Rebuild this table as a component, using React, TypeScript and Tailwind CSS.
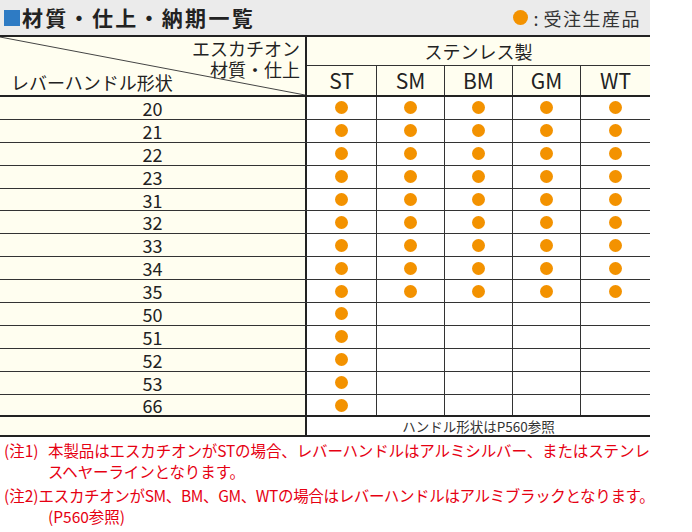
import React from "react";

const rows: [string, number][] = [
  ["20", 5],
  ["21", 5],
  ["22", 5],
  ["23", 5],
  ["31", 5],
  ["32", 5],
  ["33", 5],
  ["34", 5],
  ["35", 5],
  ["50", 1],
  ["51", 1],
  ["52", 1],
  ["53", 1],
  ["66", 1],
];

const cols = ["ST", "SM", "BM", "GM", "WT"];
const colCls = [
  "w-[70px] border-r border-[#333]",
  "w-[68px] border-r border-[#333]",
  "w-[68px] border-r border-[#333]",
  "w-[68px] border-r border-[#333]",
  "w-[69px]",
];

function Dot({ size = "w-[13px] h-[13px]" }: { size?: string }) {
  return <span className={`block rounded-full bg-[#f39200] ${size}`} />;
}

export default function App() {
  return (
    <div className="w-[692px] h-[532px] bg-white font-['Noto_Sans_CJK_JP',sans-serif] text-[#222]">
      {/* title bar */}
      <div className="w-[650px] h-[35px] bg-[#ebebeb] flex items-center justify-between">
        <div className="flex items-center">
          <span className="block w-[16px] h-[16px] bg-[#2e7bc4] ml-[4px] mr-[2px]" />
          <span className="text-[21px] leading-none font-semibold tracking-[2.3px] text-[#222]">
            材質・仕上・納期一覧
          </span>
        </div>
        <div className="flex items-center pr-[9px]">
          <Dot size="w-[15px] h-[15px]" />
          <span className="text-[18px] leading-none text-[#333] ml-[5px]">:</span>
          <span className="text-[18px] leading-none text-[#333] ml-[5px] tracking-[1.5px]">
            受注生産品
          </span>
        </div>
      </div>

      {/* table */}
      <div className="w-[650px] border-t-2 border-[#222]">
        {/* header */}
        <div className="flex h-[60px] border-b-2 border-[#222]">
          <div className="relative w-[307px] border-r-2 border-[#222] bg-[#fffef0] flex flex-col">
            <svg
              className="absolute inset-0"
              width="305"
              height="58"
              viewBox="0 0 305 58"
            >
              <line x1="0" y1="0" x2="305" y2="58" stroke="#444" strokeWidth="1" />
            </svg>
            <div className="relative text-right pr-[5px] pt-[1px] text-[18px] leading-[21px]">
              <div>エスカチオン</div>
              <div>材質・仕上</div>
            </div>
            <div className="relative pl-[11px] mt-[-8px] text-[18px] leading-[21px]">
              レバーハンドル形状
            </div>
          </div>
          <div className="w-[343px] flex flex-col bg-[#fffef0]">
            <div className="h-[29px] border-b border-[#333] flex items-center justify-center text-[18px] leading-none">
              ステンレス製
            </div>
            <div className="flex flex-1">
              {cols.map((c, i) => (
                <div
                  key={c}
                  className={`${colCls[i]} flex items-center justify-center text-[21px] leading-none`}
                >
                  {c}
                </div>
              ))}
            </div>
          </div>
        </div>

        {/* body */}
        {rows.map(([n, k], ri) => (
          <div
            key={n}
            className={`flex h-[22.9px] ${
              ri === rows.length - 1 ? "border-b-2 border-[#222]" : "border-b border-[#333]"
            }`}
          >
            <div className="w-[307px] border-r-2 border-[#222] bg-[#fffef0] flex items-center justify-center text-[18px] leading-none">
              {n}
            </div>
            {cols.map((c, i) => (
              <div key={c} className={`${colCls[i]} flex items-center justify-center`}>
                {i < k ? <Dot /> : null}
              </div>
            ))}
          </div>
        ))}

        {/* note row */}
        <div className="flex h-[20px] border-b-2 border-[#222]">
          <div className="w-[307px] border-r-2 border-[#222] bg-[#fffef0]" />
          <div className="w-[343px] flex items-center justify-center text-[13.5px] leading-none text-[#333]">
            ハンドル形状はP560参照
          </div>
        </div>
      </div>

      {/* notes */}
      <div className="text-[#e60012] text-[15.5px] leading-[21px] mt-[3px] pl-[4px] whitespace-nowrap">
        <div className="flex">
          <div className="w-[44px] shrink-0">(注1)</div>
          <div className="tracking-[-0.12px]">
            <div>本製品はエスカチオンがSTの場合、レバーハンドルはアルミシルバー、またはステンレ</div>
            <div>スヘヤーラインとなります。</div>
          </div>
        </div>
        <div className="flex mt-[3px]">
          <div className="shrink-0">(注2)</div>
          <div className="tracking-[-0.35px]">
            エスカチオンがSM、BM、GM、WTの場合はレバーハンドルはアルミブラックとなります。
          </div>
        </div>
        <div className="pl-[44px]">(P560参照)</div>
      </div>
    </div>
  );
}
